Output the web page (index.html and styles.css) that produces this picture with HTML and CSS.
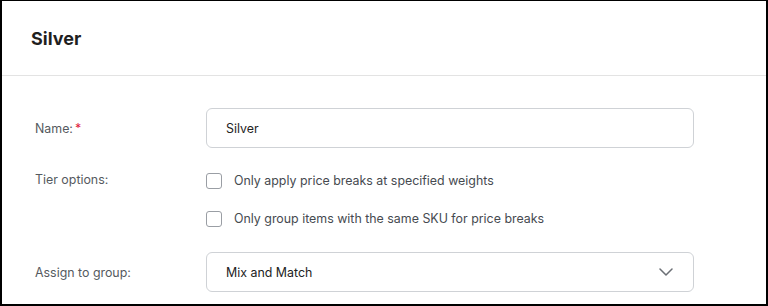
FILE: index.html
```html
<!DOCTYPE html>
<html lang="en">
<head>
    <meta charset="UTF-8">
    <title>Silver</title>
    <link rel="stylesheet" href="styles.css">
</head>
<body>
    <div class="panel">
        <div class="panel-header">
            <h1>Silver</h1>
        </div>

        <form class="panel-body">
            <div class="form-row">
                <label class="form-label" for="tier-name">Name:<span class="required">*</span></label>
                <input class="text-input" type="text" id="tier-name" value="Silver">
            </div>

            <div class="form-row form-row-top">
                <span class="form-label">Tier options:</span>
                <div class="options">
                    <label class="option">
                        <span class="checkbox"></span>
                        Only apply price breaks at specified weights
                    </label>
                    <label class="option">
                        <span class="checkbox"></span>
                        Only group items with the same SKU for price breaks
                    </label>
                </div>
            </div>

            <div class="form-row">
                <label class="form-label" for="tier-group">Assign to group:</label>
                <div class="select" id="tier-group">
                    <span>Mix and Match</span>
                    <svg class="chevron" width="14" height="8" viewBox="0 0 14 8">
                        <path d="M1 1l6 6 6-6" fill="none" stroke="#6b6f75" stroke-width="1.5" stroke-linecap="round" stroke-linejoin="round"/>
                    </svg>
                </div>
            </div>
        </form>
    </div>
</body>
</html>
```

FILE: styles.css
```css
html, body {
    margin: 0;
    padding: 0;
}

body {
    font-family: Inter, "Noto Sans", sans-serif;
    background: #fff;
}

.panel {
    width: 768px;
    height: 306px;
    box-sizing: border-box;
    border: 2px solid #000;
    border-top-width: 1px;
    overflow: hidden;
    background: white;
}

.panel-header {
    height: 74px;
    border-bottom: 1px solid #e3e3e3;
    padding: 0 29px;
    display: flex;
    align-items: center;
}

.panel-header h1 {
    margin: 0;
    font-size: 18px;
    font-weight: 700;
    color: #1f1f1f;
}

.panel-body {
    padding: 32px 0 0 33px;
}

.form-row {
    display: flex;
    align-items: center;
    margin-bottom: 23px;
}

.form-row-top {
    align-items: flex-start;
    margin-bottom: 23px;
}

.form-label {
    width: 171px;
    font-size: 12.4px;
    color: #555a60;
}

.form-row-top .form-label {
    padding-top: 1px;
}

.required {
    color: #e0203a;
    margin-left: 2px;
}

.text-input,
.select {
    width: 488px;
    height: 40px;
    box-sizing: border-box;
    border: 1px solid #cfd2d6;
    border-radius: 6px;
    padding: 0 19px;
    font-family: inherit;
    font-size: 12.4px;
    color: #222;
    outline: none;
}

.select {
    display: flex;
    align-items: center;
    justify-content: space-between;
    padding-right: 20px;
}

.options {
    display: flex;
    flex-direction: column;
    gap: 18px;
}

.option {
    display: flex;
    align-items: center;
    font-size: 12.4px;
    color: #464a50;
    line-height: 20px;
}

.checkbox {
    width: 16px;
    height: 16px;
    box-sizing: border-box;
    border: 1px solid #9a9ea4;
    border-radius: 3px;
    margin-right: 12px;
}
```
